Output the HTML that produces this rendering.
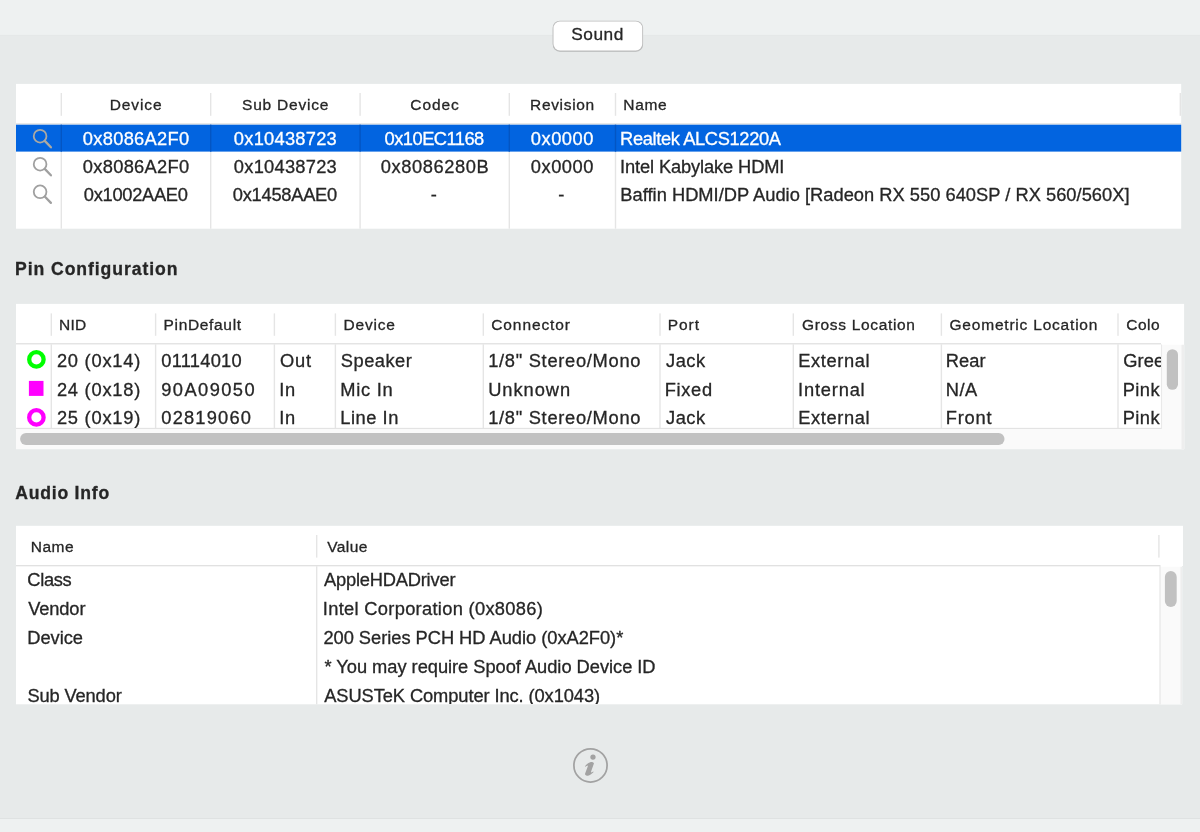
<!DOCTYPE html>
    <html><head><meta charset="utf-8"><title>Sound</title>
    <style>
    html,body{margin:0;padding:0;}
    body{width:1200px;height:832px;position:relative;overflow:hidden;background:#e7eaea;
    font-family:"Liberation Sans",sans-serif;}
    .b{position:absolute;}
    .t{position:absolute;white-space:pre;line-height:24px;font-family:"Liberation Sans",sans-serif;-webkit-text-stroke:0.3px currentColor;}
    #root{position:absolute;left:0;top:0;width:1200px;height:832px;will-change:transform;transform:translateZ(0);}
    svg{display:block;}
    </style></head><body><div id="root">
    <svg class="b" style="left:0;top:0" width="1200" height="832" viewBox="0 0 1200 832"><rect x="0.00" y="0.00" width="1200.00" height="35.30" fill="#eef1f1"/>
<rect x="0.00" y="34.90" width="1200.00" height="1.00" fill="#e4e7e7"/>
<rect x="0.00" y="818.60" width="1200.00" height="14.00" fill="#eef1f1"/>
<rect x="0.00" y="818.00" width="1200.00" height="1.00" fill="#dfe2e2"/>
<rect x="16.00" y="83.90" width="1165.20" height="144.80" fill="#fff"/>
<rect x="60.60" y="93.00" width="1.40" height="22.80" fill="#e5e5e5"/>
<rect x="60.60" y="124.50" width="1.40" height="104.20" fill="#e5e5e5"/>
<rect x="210.00" y="93.00" width="1.40" height="22.80" fill="#e5e5e5"/>
<rect x="210.00" y="124.50" width="1.40" height="104.20" fill="#e5e5e5"/>
<rect x="359.40" y="93.00" width="1.40" height="22.80" fill="#e5e5e5"/>
<rect x="359.40" y="124.50" width="1.40" height="104.20" fill="#e5e5e5"/>
<rect x="508.60" y="93.00" width="1.40" height="22.80" fill="#e5e5e5"/>
<rect x="508.60" y="124.50" width="1.40" height="104.20" fill="#e5e5e5"/>
<rect x="614.80" y="93.00" width="1.40" height="22.80" fill="#e5e5e5"/>
<rect x="614.80" y="124.50" width="1.40" height="104.20" fill="#e5e5e5"/>
<rect x="1179.60" y="93.00" width="1.40" height="22.80" fill="#e5e5e5"/>
<rect x="16.00" y="123.30" width="1165.20" height="1.20" fill="#dedede"/>
<rect x="16.00" y="124.70" width="1165.20" height="26.90" fill="#0264e0"/>
<rect x="60.60" y="124.70" width="1.40" height="26.90" fill="#0355c3"/>
<rect x="210.00" y="124.70" width="1.40" height="26.90" fill="#0355c3"/>
<rect x="359.40" y="124.70" width="1.40" height="26.90" fill="#0355c3"/>
<rect x="508.60" y="124.70" width="1.40" height="26.90" fill="#0355c3"/>
<rect x="614.80" y="124.70" width="1.40" height="26.90" fill="#0355c3"/>
<g transform="translate(40.1,136.2)" fill="none" stroke="#aca9a2"><circle cx="0" cy="0" r="6.35" stroke-width="1.8"/><path d="M4.9 4.9 L10.8 11.1" stroke-width="2.3" stroke-linecap="round"/></g>
<g transform="translate(40.1,164.2)" fill="none" stroke="#a0a0a0"><circle cx="0" cy="0" r="6.35" stroke-width="1.8"/><path d="M4.9 4.9 L10.8 11.1" stroke-width="2.3" stroke-linecap="round"/></g>
<g transform="translate(40.1,191.8)" fill="none" stroke="#a0a0a0"><circle cx="0" cy="0" r="6.35" stroke-width="1.8"/><path d="M4.9 4.9 L10.8 11.1" stroke-width="2.3" stroke-linecap="round"/></g>
<rect x="552.9" y="21.9" width="90" height="30" rx="7" fill="#000" fill-opacity="0.16"/>
<rect x="552.6" y="20.7" width="90.5" height="30.6" rx="7.2" fill="#bcbcbc"/>
<rect x="553.5" y="21.6" width="88.7" height="28.8" rx="6.4" fill="#fff"/>
<rect x="16.00" y="303.90" width="1168.10" height="145.20" fill="#fff"/>
<rect x="1161.30" y="344.80" width="22.80" height="104.30" fill="#fafafa"/>
<rect x="16.00" y="428.90" width="1168.10" height="20.20" fill="#fafafa"/>
<rect x="1181.50" y="344.80" width="2.60" height="104.30" fill="#eeeeee"/>
<rect x="50.60" y="313.40" width="1.40" height="22.40" fill="#e5e5e5"/>
<rect x="50.60" y="344.40" width="1.40" height="83.60" fill="#e5e5e5"/>
<rect x="154.90" y="313.40" width="1.40" height="22.40" fill="#e5e5e5"/>
<rect x="154.90" y="344.40" width="1.40" height="83.60" fill="#e5e5e5"/>
<rect x="273.70" y="313.40" width="1.40" height="22.40" fill="#e5e5e5"/>
<rect x="273.70" y="344.40" width="1.40" height="83.60" fill="#e5e5e5"/>
<rect x="334.70" y="313.40" width="1.40" height="22.40" fill="#e5e5e5"/>
<rect x="334.70" y="344.40" width="1.40" height="83.60" fill="#e5e5e5"/>
<rect x="482.60" y="313.40" width="1.40" height="22.40" fill="#e5e5e5"/>
<rect x="482.60" y="344.40" width="1.40" height="83.60" fill="#e5e5e5"/>
<rect x="659.30" y="313.40" width="1.40" height="22.40" fill="#e5e5e5"/>
<rect x="659.30" y="344.40" width="1.40" height="83.60" fill="#e5e5e5"/>
<rect x="792.60" y="313.40" width="1.40" height="22.40" fill="#e5e5e5"/>
<rect x="792.60" y="344.40" width="1.40" height="83.60" fill="#e5e5e5"/>
<rect x="940.70" y="313.40" width="1.40" height="22.40" fill="#e5e5e5"/>
<rect x="940.70" y="344.40" width="1.40" height="83.60" fill="#e5e5e5"/>
<rect x="1117.30" y="313.40" width="1.40" height="22.40" fill="#e5e5e5"/>
<rect x="1117.30" y="344.40" width="1.40" height="83.60" fill="#e5e5e5"/>
<rect x="16.00" y="343.20" width="1145.00" height="1.20" fill="#dedede"/>
<rect x="16.00" y="427.85" width="1145.80" height="1.10" fill="#e2e2e2"/>
<rect x="1160.95" y="344.40" width="1.10" height="84.10" fill="#e9e9e9"/>
<rect x="1166.80" y="349.20" width="11.20" height="40.60" fill="#c1c1c1" rx="5.6"/>
<rect x="20.10" y="433.10" width="984.40" height="11.80" fill="#c1c1c1" rx="5.9"/>
<circle cx="36.4" cy="359.4" r="7.2" fill="none" stroke="#00ff00" stroke-width="4.3"/>
<rect x="28.90" y="380.90" width="14.60" height="15.00" fill="#ff00ff"/>
<clipPath id="cp"><rect x="16" y="344" width="36" height="84"/></clipPath>
<circle cx="36.4" cy="417.4" r="7.2" fill="none" stroke="#ff00ff" stroke-width="4.3" clip-path="url(#cp)"/>
<rect x="16.00" y="525.80" width="1167.00" height="40.20" fill="#fff"/>
<rect x="16.00" y="566.00" width="1166.10" height="138.30" fill="#fff"/>
<rect x="1160.30" y="566.80" width="21.80" height="137.50" fill="#fafafa"/>
<rect x="1180.40" y="566.80" width="1.70" height="137.50" fill="#eeeeee"/>
<rect x="1159.45" y="566.20" width="1.10" height="138.10" fill="#e4e4e4"/>
<rect x="16.00" y="565.10" width="1144.50" height="1.20" fill="#dedede"/>
<rect x="316.00" y="535.00" width="1.40" height="22.60" fill="#e5e5e5"/>
<rect x="1158.20" y="535.00" width="1.40" height="22.60" fill="#e5e5e5"/>
<rect x="316.00" y="566.20" width="1.40" height="138.10" fill="#e5e5e5"/>
<rect x="1164.90" y="571.00" width="11.80" height="36.00" fill="#c1c1c1" rx="5.9"/>
<g transform="translate(590.5,765.4)" fill="#a2a2a2"><circle cx="0" cy="0" r="16.6" fill="none" stroke="#a2a2a2" stroke-width="1.75"/><circle cx="2.47" cy="-8.3" r="2.65"/><path d="M-5.6,1.05 C-4.6,-0.6 -2.6,-2.6 -0.3,-3.24 C0.6,-3.5 1.6,-3.45 2.2,-3.2 C3.2,-2.9 3.6,-2.4 3.33,-1.72 L0.7,5.85 C0.55,6.4 0.4,6.9 0.55,7.2 C1.3,7.0 2.2,6.6 2.82,6.2 L3.1,6.6 C2.2,7.6 0.8,8.8 -0.31,9.38 C-1.2,9.9 -2.0,10.3 -2.83,10.39 C-3.8,10.5 -4.6,10.3 -5.0,9.7 C-5.5,9.1 -5.55,8.8 -5.46,8.4 L-2.4,0.0 C-3.4,0.1 -4.4,0.7 -5.2,1.4 Z"/></g></svg>
<div class="t" style="left:109.78px;top:93px;font-size:15.5px;letter-spacing:0.894px;color:#262626;">Device</div>
<div class="t" style="left:242.10px;top:93px;font-size:15.5px;letter-spacing:0.781px;color:#262626;">Sub Device</div>
<div class="t" style="left:410.26px;top:93px;font-size:15.5px;letter-spacing:0.946px;color:#262626;">Codec</div>
<div class="t" style="left:530.03px;top:93px;font-size:15.5px;letter-spacing:0.675px;color:#262626;">Revision</div>
<div class="t" style="left:623.28px;top:93px;font-size:15.5px;letter-spacing:0.667px;color:#262626;">Name</div>
<div class="t" style="left:82.84px;top:127px;font-size:18.3px;letter-spacing:0.295px;color:#ffffff;">0x8086A2F0</div>
<div class="t" style="left:233.84px;top:127px;font-size:18.3px;letter-spacing:0.251px;color:#ffffff;">0x10438723</div>
<div class="t" style="left:384.59px;top:127px;font-size:18.3px;letter-spacing:-0.522px;color:#ffffff;">0x10EC1168</div>
<div class="t" style="left:530.84px;top:127px;font-size:18.3px;letter-spacing:0.519px;color:#ffffff;">0x0000</div>
<div class="t" style="left:620.05px;top:127px;font-size:18.3px;letter-spacing:-0.359px;color:#ffffff;">Realtek ALCS1220A</div>
<div class="t" style="left:82.84px;top:155px;font-size:18.3px;letter-spacing:0.295px;color:#262626;">0x8086A2F0</div>
<div class="t" style="left:233.84px;top:155px;font-size:18.3px;letter-spacing:0.251px;color:#262626;">0x10438723</div>
<div class="t" style="left:380.84px;top:155px;font-size:18.3px;letter-spacing:0.573px;color:#262626;">0x8086280B</div>
<div class="t" style="left:530.84px;top:155px;font-size:18.3px;letter-spacing:0.519px;color:#262626;">0x0000</div>
<div class="t" style="left:620.11px;top:155px;font-size:18.3px;letter-spacing:-0.131px;color:#262626;">Intel Kabylake HDMI</div>
<div class="t" style="left:83.84px;top:183px;font-size:18.3px;letter-spacing:-0.295px;color:#262626;">0x1002AAE0</div>
<div class="t" style="left:232.84px;top:183px;font-size:18.3px;letter-spacing:-0.267px;color:#262626;">0x1458AAE0</div>
<div class="t" style="left:430.74px;top:183px;font-size:18.3px;letter-spacing:0.000px;color:#262626;">-</div>
<div class="t" style="left:558.24px;top:183px;font-size:18.3px;letter-spacing:0.000px;color:#262626;">-</div>
<div class="t" style="left:620.30px;top:183px;font-size:18.3px;letter-spacing:0.019px;color:#262626;">Baffin HDMI/DP Audio [Radeon RX 550 640SP / RX 560/560X]</div>
<div class="t" style="left:571.31px;top:22px;font-size:17.3px;letter-spacing:0.504px;color:#262626;">Sound</div>
<div class="t" style="left:15.02px;top:257px;font-size:17.6px;letter-spacing:0.931px;color:#262626;font-weight:bold;">Pin Configuration</div>
<div class="t" style="left:15.16px;top:481px;font-size:17.6px;letter-spacing:0.784px;color:#262626;font-weight:bold;">Audio Info</div>
<div class="b" style="left:16px;top:304px;width:1145px;height:124.4px;overflow:hidden;background:none">
<div class="b" style="left:-16px;top:-304px;width:1200px;height:832px;background:none">
<div class="t" style="left:59.03px;top:313px;font-size:15.5px;letter-spacing:0.230px;color:#262626;">NID</div>
<div class="t" style="left:163.53px;top:313px;font-size:15.5px;letter-spacing:0.669px;color:#262626;">PinDefault</div>
<div class="t" style="left:343.53px;top:313px;font-size:15.5px;letter-spacing:0.794px;color:#262626;">Device</div>
<div class="t" style="left:491.26px;top:313px;font-size:15.5px;letter-spacing:0.897px;color:#262626;">Connector</div>
<div class="t" style="left:667.78px;top:313px;font-size:15.5px;letter-spacing:0.949px;color:#262626;">Port</div>
<div class="t" style="left:802.02px;top:313px;font-size:15.5px;letter-spacing:0.668px;color:#262626;">Gross Location</div>
<div class="t" style="left:949.52px;top:313px;font-size:15.5px;letter-spacing:0.793px;color:#262626;">Geometric Location</div>
<div class="t" style="left:1126.21px;top:313px;font-size:15.5px;letter-spacing:0.549px;color:#262626;">Color</div>
<div class="t" style="left:56.88px;top:349px;font-size:18.3px;letter-spacing:0.778px;color:#262626;">20 (0x14)</div>
<div class="t" style="left:161.34px;top:349px;font-size:18.3px;letter-spacing:0.244px;color:#262626;">01114010</div>
<div class="t" style="left:280.03px;top:349px;font-size:18.3px;letter-spacing:0.791px;color:#262626;">Out</div>
<div class="t" style="left:340.87px;top:349px;font-size:18.3px;letter-spacing:0.465px;color:#262626;">Speaker</div>
<div class="t" style="left:488.16px;top:349px;font-size:18.3px;letter-spacing:0.710px;color:#262626;">1/8&quot; Stereo/Mono</div>
<div class="t" style="left:666.01px;top:349px;font-size:18.3px;letter-spacing:0.522px;color:#262626;">Jack</div>
<div class="t" style="left:798.30px;top:349px;font-size:18.3px;letter-spacing:0.614px;color:#262626;">External</div>
<div class="t" style="left:945.80px;top:349px;font-size:18.3px;letter-spacing:0.027px;color:#262626;">Rear</div>
<div class="t" style="left:1123.28px;top:349px;font-size:18.3px;letter-spacing:0.074px;color:#262626;">Green</div>
<div class="t" style="left:56.88px;top:378px;font-size:18.3px;letter-spacing:0.778px;color:#262626;">24 (0x18)</div>
<div class="t" style="left:161.19px;top:378px;font-size:18.3px;letter-spacing:1.443px;color:#262626;">90A09050</div>
<div class="t" style="left:279.21px;top:378px;font-size:18.3px;letter-spacing:0.677px;color:#262626;">In</div>
<div class="t" style="left:340.20px;top:378px;font-size:18.3px;letter-spacing:0.735px;color:#262626;">Mic In</div>
<div class="t" style="left:488.14px;top:378px;font-size:18.3px;letter-spacing:0.964px;color:#262626;">Unknown</div>
<div class="t" style="left:664.80px;top:378px;font-size:18.3px;letter-spacing:0.653px;color:#262626;">Fixed</div>
<div class="t" style="left:798.11px;top:378px;font-size:18.3px;letter-spacing:0.797px;color:#262626;">Internal</div>
<div class="t" style="left:945.80px;top:378px;font-size:18.3px;letter-spacing:0.476px;color:#262626;">N/A</div>
<div class="t" style="left:1122.70px;top:378px;font-size:18.3px;letter-spacing:0.465px;color:#262626;">Pink</div>
<div class="t" style="left:56.88px;top:406px;font-size:18.3px;letter-spacing:0.778px;color:#262626;">25 (0x19)</div>
<div class="t" style="left:161.34px;top:406px;font-size:18.3px;letter-spacing:1.177px;color:#262626;">02819060</div>
<div class="t" style="left:279.21px;top:406px;font-size:18.3px;letter-spacing:0.677px;color:#262626;">In</div>
<div class="t" style="left:340.20px;top:406px;font-size:18.3px;letter-spacing:0.550px;color:#262626;">Line In</div>
<div class="t" style="left:488.16px;top:406px;font-size:18.3px;letter-spacing:0.710px;color:#262626;">1/8&quot; Stereo/Mono</div>
<div class="t" style="left:666.01px;top:406px;font-size:18.3px;letter-spacing:0.522px;color:#262626;">Jack</div>
<div class="t" style="left:798.30px;top:406px;font-size:18.3px;letter-spacing:0.614px;color:#262626;">External</div>
<div class="t" style="left:945.80px;top:406px;font-size:18.3px;letter-spacing:0.778px;color:#262626;">Front</div>
<div class="t" style="left:1122.70px;top:406px;font-size:18.3px;letter-spacing:0.465px;color:#262626;">Pink</div>
</div></div>
<div class="b" style="left:16px;top:526px;width:1144px;height:178.3px;overflow:hidden;background:none">
<div class="b" style="left:-16px;top:-526px;width:1200px;height:832px;background:none">
<div class="t" style="left:30.78px;top:535px;font-size:15.5px;letter-spacing:0.500px;color:#262626;">Name</div>
<div class="t" style="left:327.23px;top:535px;font-size:15.5px;letter-spacing:0.414px;color:#262626;">Value</div>
<div class="t" style="left:27.37px;top:568px;font-size:18.3px;letter-spacing:-0.370px;color:#262626;">Class</div>
<div class="t" style="left:28.22px;top:597px;font-size:18.3px;letter-spacing:-0.134px;color:#262626;">Vendor</div>
<div class="t" style="left:27.30px;top:626px;font-size:18.3px;letter-spacing:-0.035px;color:#262626;">Device</div>
<div class="t" style="left:27.47px;top:684px;font-size:18.3px;letter-spacing:-0.142px;color:#262626;">Sub Vendor</div>
<div class="t" style="left:324.01px;top:568px;font-size:18.3px;letter-spacing:-0.202px;color:#262626;">AppleHDADriver</div>
<div class="t" style="left:322.86px;top:597px;font-size:18.3px;letter-spacing:0.303px;color:#262626;">Intel Corporation (0x8086)</div>
<div class="t" style="left:323.38px;top:626px;font-size:18.3px;letter-spacing:-0.027px;color:#262626;">200 Series PCH HD Audio (0xA2F0)*</div>
<div class="t" style="left:324.51px;top:655px;font-size:18.3px;letter-spacing:-0.033px;color:#262626;">* You may require Spoof Audio Device ID</div>
<div class="t" style="left:324.26px;top:684px;font-size:18.3px;letter-spacing:-0.089px;color:#262626;">ASUSTeK Computer Inc. (0x1043)</div>
</div></div>
</div></body></html>
